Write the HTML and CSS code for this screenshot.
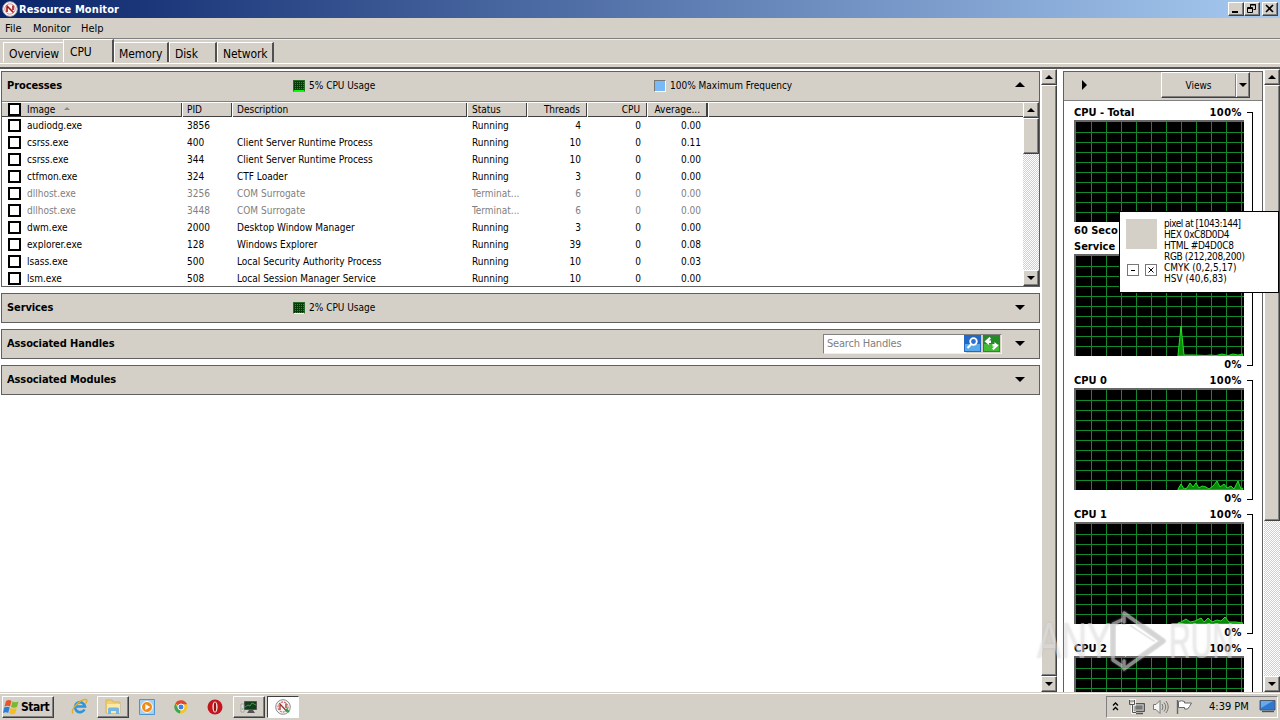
FILE: index.html
```html
<!DOCTYPE html>
<html lang="en">
<head>
  <meta charset="UTF-8">
  <meta name="viewport" content="width=device-width, initial-scale=1.0">
  <title>Resource Monitor</title>
  <link rel="stylesheet" href="styles.css">
</head>
<body>
  <header class="titlebar">
    <svg class="app-icon" width="16" height="16" viewBox="0 0 16 16"><circle cx="8" cy="8" r="7.3" fill="#fff" stroke="#a9a9a9"/><circle cx="8" cy="8" r="5.2" fill="#f5f5f5" stroke="#c77" stroke-width=".8"/><path d="M4.500 4.500l7 7M5 11V6M11 9V4.500" stroke="#a11" stroke-width="1.6"/></svg>
    <h1>Resource Monitor</h1>
    <div class="window-buttons">
      <button class="btn"><svg width="14" height="12"><path d="M3 9h6" stroke="#000" stroke-width="2"/></svg></button>
      <button class="btn"><svg width="14" height="12" fill="none" stroke="#000"><path d="M5.500 4V1.500H10.500V6.500H8.500M5 2h6M2.500 4.500h5v5h-5zM2 5.500h6"/></svg></button>
      <button class="btn close"><svg width="14" height="12"><path d="M3 2l7 7M10 2l-7 7" stroke="#000" stroke-width="1.600"/></svg></button>
    </div>
  </header>

  <nav class="menubar"><span class="m-file">File</span><span class="m-monitor">Monitor</span><span>Help</span></nav>

  <div class="tabs">
    <div class="tab t-overview">Overview</div>
    <div class="tab t-cpu active">CPU</div>
    <div class="tab t-memory">Memory</div>
    <div class="tab t-disk">Disk</div>
    <div class="tab t-network">Network</div>
  </div>

  <main class="content">
    <div class="left">
      <section class="panel processes">
        <div class="panel-head">
          <h2>Processes</h2>
          <span class="usage"><i class="meter green"></i>5% CPU Usage</span>
          <span class="usage freq"><i class="meter blue"></i>100% Maximum Frequency</span>
          <i class="arrow up"></i>
        </div>
        <div class="list">
          <div class="table">
            <div class="row head">
              <div class="c-check"><i class="check"></i></div>
              <div class="c-image">Image<i class="sort"></i></div>
              <div class="c-pid">PID</div>
              <div class="c-desc">Description</div>
              <div class="c-status">Status</div>
              <div class="c-threads">Threads</div>
              <div class="c-cpu">CPU</div>
              <div class="c-avg">Average...</div>
              <div class="c-rest"></div>
            </div>
            <div id="rows"></div>
          </div>
          <div class="scrollbar list-scroll">
            <div class="btn sb"><i class="tri up"></i></div>
            <div class="btn thumb"></div>
            <div class="btn sb end"><i class="tri"></i></div>
          </div>
        </div>
      </section>
      <section class="panel">
        <div class="panel-head">
          <h2>Services</h2>
          <span class="usage"><i class="meter green idle"></i>2% CPU Usage</span>
          <i class="arrow"></i>
        </div>
      </section>
      <section class="panel">
        <div class="panel-head">
          <h2>Associated Handles</h2>
          <div class="search">
            <span class="search-text">Search Handles</span>
            <svg width="17" height="17"><rect width="17" height="17" fill="#2368c4"/><path d="M1 9h15v7H1z" fill="#57a8ee"/><circle cx="9.500" cy="6.500" r="3.300" fill="#2c70d0" stroke="#fff" stroke-width="1.800"/><path d="M7 9.500L3.500 13" stroke="#fff" stroke-width="2.200"/></svg>
            <svg width="17" height="17"><rect width="17" height="17" fill="#278a2a"/><path d="M1 9h15v7H1z" fill="#43bb36"/><path d="M6.500 2L1.500 6.500 6 10V8h2V5.500H6L8 3.500zM10.500 15l5-4.500L11.500 7v2h-2v2.500h2L9 13.500z" fill="#fff"/></svg>
          </div>
          <i class="arrow"></i>
        </div>
      </section>
      <section class="panel">
        <div class="panel-head">
          <h2>Associated Modules</h2>
          <i class="arrow"></i>
        </div>
      </section>
    </div>
    <div class="scrollbar left-scroll">
      <div class="btn sb"><i class="tri up"></i></div>
      <div class="btn thumb"></div>
      <div class="btn sb end"><i class="tri"></i></div>
    </div>

    <aside class="side">
      <div class="side-head">
        <i class="arrow right"></i>
        <div class="btn views"><span>Views</span><b><i class="tri"></i></b></div>
      </div>
      <div class="graphs" id="graphs"></div>
    </aside>
    <div class="scrollbar side-scroll">
      <div class="btn sb"><i class="tri up"></i></div>
      <div class="btn thumb"></div>
      <div class="btn sb end"><i class="tri"></i></div>
    </div>
  </main>

  <footer class="taskbar">
    <div class="btn start">
      <svg width="17" height="16" viewBox="0 0 17 16"><path d="M3 2q3-2 5.500 0L7 7.500Q4.500 6 1.500 7.500z" fill="#e8552b"/><path d="M9.500 2.500q3 1.500 6 0L14 8q-3 1.300-6 0z" fill="#7ab92f"/><path d="M1.200 8.500q3-1.500 5.500 0L5.200 14Q3 12.500 0 14z" fill="#2b7fd6"/><path d="M7.700 9q3 1.500 6 0l-1.500 5.500q-3 1.500-6 0z" fill="#f5bd22"/></svg>
      <b>Start</b>
    </div>
    <div class="apps">
      <div class="app"><svg width="17" height="17" viewBox="0 0 17 17" fill="none"><path d="M13.500 11.500A5 5 0 1 1 14 8.500H5" stroke="#2c96dd" stroke-width="2.600"/><path d="M2 15.500C-1 12 9 1 15 1.500c2 .5.500 3-.5 4" stroke="#e3ad2b" stroke-width="1.300"/></svg></div>
      <div class="app btn"><svg width="17" height="17" viewBox="0 0 17 17"><path d="M1 2h6l1 2h7v11H1z" fill="#efcf72" stroke="#c9a54b" stroke-width=".6"/><path d="M2 6h13v9H2z" fill="#fbe9a6"/><path d="M3 16v-5q0-1.500 1.500-1.500h8Q14 9.500 14 11v5h-3v-3H6v3z" fill="#74b7e4"/></svg></div>
      <div class="app"><svg width="16" height="16" viewBox="0 0 16 16"><path d="M.5.500h15v15H.5z" fill="#a6d0ef" stroke="#4f94cf"/><circle cx="8" cy="8" r="5.500" fill="#f28a17" stroke="#fff"/><path d="M6.300 5v6l5-3z" fill="#fff"/></svg></div>
      <div class="app"><svg width="14" height="14" viewBox="0 0 14 14"><circle cx="7" cy="7" r="6.500" fill="#f6c42c"/><path d="M7 7L1.300 3.500A6.600 6.600 0 0 1 13 4.300H7z" fill="#df4636"/><path d="M7 7l-1 6.500A6.500 6.500 0 0 1 1.300 3.600L4 8.500z" fill="#3aa757"/><circle cx="7" cy="7" r="3" fill="#3f7fe8" stroke="#fff"/></svg></div>
      <div class="app"><svg width="16" height="16" viewBox="0 0 16 16"><circle cx="8" cy="8" r="7.500" fill="#c3161c"/><ellipse cx="8" cy="8" rx="2.600" ry="5.500" fill="#f4e4e2"/><ellipse cx="8" cy="8" rx="1.200" ry="4.800" fill="#9d1015"/></svg></div>
      <div class="app btn"><svg width="18" height="16" viewBox="0 0 18 16"><path d="M4.500 2.500h12v8h-12z" fill="#123c1c" stroke="#555"/><path d="M5 8l3-2 2 1 2-3 4 2" stroke="#3d9b45" fill="none"/><path d="M9 11h4l2 3H7z" fill="#555"/><path d="M1 5h3v8H1z" fill="#e2e2e2" stroke="#888" stroke-width=".6"/><path d="M2 10h1" stroke="#3a3"/></svg></div>
      <div class="app btn pressed"><svg width="16" height="16" viewBox="0 0 16 16"><circle cx="8" cy="8" r="7.300" fill="#f5f5f5" stroke="#888"/><circle cx="8" cy="8" r="5" fill="none" stroke="#d33" stroke-dasharray="2 1"/><path d="M4.500 4.500l7.500 8M5 11V6M11 9V4.500" stroke="#943b34" stroke-width="1.300"/><path d="M11 10l3 3" stroke="#2a9c46" stroke-width="2"/></svg></div>
    </div>
    <div class="tray">
      <svg class="chev" width="7" height="11" fill="none" stroke="#000" stroke-width="1.300"><path d="M1 4.500L3.500 2 6 4.500M1 9l2.500-2.500L6 9"/></svg>
      <svg width="17" height="16" viewBox="0 0 17 16"><path d="M4.500 4.500h11v8h-11z" fill="#9b9b9b" stroke="#555"/><path d="M6 6h8v5H6z" fill="#777" stroke="#ddd" stroke-width=".6"/><path d="M7 14.500h7" stroke="#555" stroke-width="1.500"/><path d="M.5 1.500h5v4h-2v8H7" fill="none" stroke="#fff" stroke-width="2.600"/><path d="M.5 1v4.500h5V1M3.500 5.500v8H7M2 1v2M4 1v2" fill="none" stroke="#555"/></svg>
      <svg class="vol" width="17" height="16" viewBox="0 0 17 16"><path d="M1.500 5.500H4l4-4v13l-4-4H1.500z" fill="#f6f6f6" stroke="#777"/><path d="M10 5q2 3 0 6M12 3.500q3.500 4.500 0 9M14 2q4.500 6 0 12" fill="none" stroke="#777"/></svg>
      <svg class="flag" width="17" height="16" viewBox="0 0 17 16"><path d="M2.500 2.500q3-1.500 6 0v1.500h7l-2 3.500-2 2.500h-3V8.500h-6z" fill="#fff" stroke="#666"/><path d="M1.500 1v14" stroke="#666" stroke-width="1.400"/></svg>
      <span class="clock">4:39 PM</span>
      <svg class="desk" width="17" height="15" viewBox="0 0 17 15"><path d="M1 1.500h15V11H1z" fill="#2f77d0" stroke="#4b5a6d"/><path d="M2 2h12L2 9z" fill="#68a9e8"/><path d="M3 12.500h12" stroke="#456" stroke-width="1.400"/></svg>
    </div>
  </footer>

  <div class="pixel-tip">
    <div class="tip-left">
      <div class="swatch"></div>
      <div class="tip-buttons">
        <i><svg width="10" height="10"><path d="M3 5.500h4" stroke="#000"/></svg></i>
        <i><svg width="10" height="10"><path d="M2.500 2.500l5 5M7.500 2.500l-5 5" stroke="#000"/></svg></i>
      </div>
    </div>
    <div class="tip-text">
      <p class="p1">pixel at [1043:144]</p><p class="p2">HEX 0xC8D0D4</p><p class="p3">HTML #D4D0C8</p><p class="p4">RGB (212,208,200)</p><p>CMYK (0,2,5,17)</p><p>HSV (40,6,83)</p>
    </div>
  </div>

  <div class="watermark">
    <span class="any">ANY</span>
    <svg width="60" height="64" viewBox="0 0 60 64" fill="none" stroke-linejoin="round" stroke-linecap="round"><path d="M15 13V4L54 32 15 60v-8M15 10L4 15v36l9 6" stroke="#777" stroke-opacity=".22" stroke-width="6"/><path d="M15 13V4L54 32 15 60v-8M15 10L4 15v36l9 6" stroke="#ccc" stroke-opacity=".62" stroke-width="3.500"/><path d="M16 16v32l22-16z" fill="#fff" fill-opacity=".8"/><path d="M22 17l23 15" stroke="#ddd" stroke-opacity=".7" stroke-width="2"/></svg>
    <span class="run">RUN</span>
  </div>

  <script>
    const processes = [
      ['audiodg.exe', 3856, '', 'Running', 4, '0.00'],
      ['csrss.exe', 400, 'Client Server Runtime Process', 'Running', 10, '0.11'],
      ['csrss.exe', 344, 'Client Server Runtime Process', 'Running', 10, '0.00'],
      ['ctfmon.exe', 324, 'CTF Loader', 'Running', 3, '0.00'],
      ['dllhost.exe', 3256, 'COM Surrogate', 'Terminat...', 6, '0.00'],
      ['dllhost.exe', 3448, 'COM Surrogate', 'Terminat...', 6, '0.00'],
      ['dwm.exe', 2000, 'Desktop Window Manager', 'Running', 3, '0.00'],
      ['explorer.exe', 128, 'Windows Explorer', 'Running', 39, '0.08'],
      ['lsass.exe', 500, 'Local Security Authority Process', 'Running', 10, '0.03'],
      ['lsm.exe', 508, 'Local Session Manager Service', 'Running', 10, '0.00']
    ];

    document.getElementById('rows').innerHTML = processes.map(p => `
      <div class="row ${p[3] === 'Running' ? '' : 'dead'}">
        <div class="c-check"><i class="check"></i></div>
        <div class="c-image">${p[0]}</div>
        <div class="c-pid">${p[1]}</div>
        <div class="c-desc">${p[2]}</div>
        <div class="c-status">${p[3]}</div>
        <div class="c-threads">${p[4]}</div>
        <div class="c-cpu">0</div>
        <div class="c-avg">${p[5]}</div>
      </div>`).join('');

    // each graph is 170 x 102, usage line runs along the bottom edge
    const graphs = [
      { name: 'CPU - Total', max: '100%', foot: '60 Seco', line: '' },
      { name: 'Service', max: '', foot: '', min: '0%', line: '104,101 107,72 110,101 120,101 132,101.500 136,101 142,101.500 148,100 154,101.500 159,100 164,101 169,100' },
      { name: 'CPU 0', max: '100%', foot: '', min: '0%', line: '104,101 107,96 110,101 113,100 116,95 119,99 122,95 125,100 128,98 132,99 135,101 139,98 143,93 146,99 150,96 153,100 157,98 160,101 164,93 167,101 169,100' },
      { name: 'CPU 1', max: '100%', foot: '', min: '0%', line: '104,101 107,100 112,97 116,100 121,99 127,96 130,100 134,96 138,100 143,98 147,99 151,95 155,100 162,100 169,101' },
      { name: 'CPU 2', max: '100%', line: '' }
    ];

    document.getElementById('graphs').innerHTML = graphs.map(g => `
      <div class="graph">
        <div class="label"><span>${g.name}</span><span class="pct">${g.max}</span></div>
        <div class="plot"><svg width="169" height="102"><polygon points="104,102 ${g.line} 169,102" class="${g.line ? 'line' : 'none'}"/></svg></div>
        <div class="label foot"><span>${g.foot || ''}</span><span class="pct">${g.min || ''}</span></div>
        <i class="bracket"></i>
      </div>`).join('');
  </script>
</body>
</html>
```
FILE: styles.css
```css
* {
  margin: 0;
  padding: 0;
  box-sizing: border-box;
}

body {
  width: 1280px;
  height: 720px;
  overflow: hidden;
  display: flex;
  flex-direction: column;
  background: #d4d0c8;
  font-family: Tahoma, "DejaVu Sans Condensed", "DejaVu Sans", sans-serif;
  font-stretch: condensed;
  font-size: 10px;
  line-height: 14px;
  color: #000;
  white-space: nowrap;
}

i, svg {
  display: block;
  flex-shrink: 0;
}

.btn {
  background: #d4d0c8;
  border: 1px solid;
  border-color: #fff #404040 #404040 #fff;
  box-shadow: inset -1px -1px #808080;
}

/* Title bar, menu and tabs */
.titlebar {
  height: 18px;
  flex-shrink: 0;
  display: flex;
  align-items: center;
  padding: 0 2px;
  background: linear-gradient(to right, #0a246a, #a6caf0);
}

h1 {
  flex: 1;
  margin-left: 1px;
  padding-top: 1px;
  font-size: 11px;
  letter-spacing: 0.1px;
  color: #fff;
}

.window-buttons {
  display: flex;
}

.window-buttons .btn {
  width: 16px;
  height: 14px;
}

.window-buttons .close {
  margin-left: 2px;
}

.menubar {
  height: 21px;
  flex-shrink: 0;
  display: flex;
  padding: 4px 5px 2px;
  border-bottom: 1px solid #808080;
  font-size: 11px;
}

.m-file {
  width: 28px;
}

.m-monitor {
  width: 48px;
}

.tabs {
  height: 30px;
  flex-shrink: 0;
  display: flex;
  align-items: flex-end;
  padding: 0 3px 5px;
  border-top: 1px solid #eee;
  border-bottom: 2px solid #555;
  background: linear-gradient(#fff, #fff) 0 23px / 100% 1px no-repeat;
  font-size: 12px;
}

.tab {
  height: 20px;
  padding: 4px 0 0 5px;
  border: 1px solid #fff;
  border-right: 2px solid #505050;
  border-bottom: 0;
  background: #d4d0c8;
  letter-spacing: -0.1px;
}

.t-overview { width: 60px; border-right: 0; }
.t-cpu { width: 51px; }
.t-memory { width: 55px; padding-left: 4px; }
.t-disk { width: 48px; }
.t-network { width: 57px; }

.tab.active {
  height: 23px;
  padding: 5px 0 0 6px;
}

/* Main area */
.content {
  height: 623px;
  flex-shrink: 0;
  display: flex;
  background: #fff;
}

.left {
  width: 1041px;
  padding: 2px 1px 0;
}

.panel {
  height: 30px;
  margin-bottom: 6px;
  border: 1px solid #606060;
  background: #d4d0c8;
}

.processes {
  height: 216px;
}

.panel-head {
  height: 29px;
  display: flex;
  align-items: center;
  padding: 0 14px 2px 5px;
}

h2 {
  width: 286px;
  padding-top: 1px;
  font-size: 11px;
  letter-spacing: -0.1px;
}

.usage {
  width: 361px;
  display: flex;
  align-items: center;
  gap: 4px;
  padding-top: 1px;
}

.meter {
  width: 12px;
  height: 12px;
  margin-top: -1px;
  border: 1px solid #555;
}

.meter.green {
  background:
    repeating-linear-gradient(90deg, #063c06 0 1px, transparent 1px 2px),
    repeating-linear-gradient(#063c06 0 1px, #1d9a1d 1px 2px);
  border-color: #2a6a2a;
  border-bottom: 2px solid #0f0;
}

.meter.idle {
  border-bottom: 1px solid #f5f5f5;
}

.meter.blue {
  background: #78b9f8;
  border-color: #777 #fff #fff #777;
}

.arrow {
  margin-left: auto;
  border: 5px solid transparent;
  border-top-color: #000;
  border-bottom: 0;
}

.arrow.up {
  border-top: 0;
  border-bottom: 5px solid #000;
  margin-top: -3px;
}

.arrow.right {
  border: 5px solid transparent;
  border-left-color: #000;
  border-right: 0;
  margin: 0;
}

.search {
  width: 179px;
  height: 20px;
  margin-left: 530px;
  display: flex;
  align-items: center;
  gap: 2px;
  padding: 1px;
  border: 1px solid;
  border-color: #808080 #eee #eee #808080;
  background: linear-gradient(to right, #fff 142px, #d4d0c8 142px);
}

.search-text {
  flex: 1;
  padding: 1px 0 0 2px;
  font-size: 11px;
  letter-spacing: -0.2px;
  color: #808080;
}

.list {
  height: 185px;
  display: flex;
  border-top: 1px solid #808080;
  background: #fff;
}

.table {
  flex: 1;
}

.row {
  height: 17px;
  display: flex;
  align-items: center;
}

.row > div {
  flex-shrink: 0;
}

.c-check { width: 20px; padding-left: 6px; }
.c-image { width: 160px; padding-left: 5px; }
.c-pid { width: 50px; padding-left: 5px; }
.c-desc { width: 235px; padding-left: 5px; }
.c-status { width: 60px; padding-left: 5px; }
.c-threads { width: 60px; padding-right: 6px; text-align: right; }
.c-cpu { width: 60px; padding-right: 6px; text-align: right; }
.c-avg { width: 60px; padding-right: 6px; text-align: right; }

.head {
  height: 15px;
  background: #d4d0c8;
  border-top: 1px solid #fff;
  border-bottom: 1px solid #404040;
}

.head > div:not(.c-check) {
  height: 14px;
  border-right: 1px solid #404040;
  box-shadow: 1px 0 #fff;
}

.head .c-image {
  display: flex;
}

.head .c-rest {
  border: 0;
  box-shadow: none;
}

.check {
  width: 13px;
  height: 13px;
  border: 2px solid #000;
  background: #fff;
}

.sort {
  margin: 4px 0 0 9px;
  border: 3px solid transparent;
  border-top: 0;
  border-bottom-color: #888;
  align-self: flex-start;
}

.dead {
  color: #808080;
}

/* Scrollbars */
.scrollbar {
  width: 16px;
  display: flex;
  flex-direction: column;
  background: repeating-conic-gradient(#fff 0 25%, #d4d0c8 0 50%) 0 0 / 2px 2px;
}

.sb {
  height: 16px;
  flex-shrink: 0;
  display: flex;
  align-items: center;
  justify-content: center;
}

.sb.end {
  margin-top: auto;
}

.tri {
  border: 4px solid transparent;
  border-top-color: #000;
  border-bottom: 0;
}

.tri.up {
  border-top: 0;
  border-bottom: 4px solid #000;
}

.list-scroll .thumb { height: 36px; }
.left-scroll .thumb { height: 591px; }
.side-scroll .thumb { height: 436px; }

/* Graph column */
.side {
  width: 200px;
  margin: 2px 1px 0 6px;
  border: 1px solid #606060;
  border-bottom: 0;
  overflow: hidden;
}

.side-head {
  height: 29px;
  display: flex;
  align-items: center;
  justify-content: space-between;
  padding: 0 12px 2px 18px;
  border-bottom: 1px solid #808080;
  background: #d4d0c8;
}

.views {
  width: 89px;
  height: 26px;
  display: flex;
  align-items: center;
}

.views span {
  flex: 1;
  padding-top: 2px;
  text-align: center;
}

.views b {
  width: 14px;
  height: 23px;
  border-left: 1px solid #808080;
  box-shadow: inset 1px 0 #fff;
  display: flex;
  align-items: center;
  justify-content: center;
}

.graphs {
  padding: 4px 0 0 10px;
}

.graph {
  position: relative;
  width: 180px;
  height: 134px;
}

.label {
  height: 15px;
  width: 168px;
  display: flex;
  justify-content: space-between;
  font-size: 11px;
  line-height: 15px;
  font-weight: bold;
}

.pct {
  letter-spacing: 0.5px;
}

.plot {
  width: 170px;
  height: 102px;
  border-top: 2px solid #666;
  border-left: 2px solid #666;
  background:
    repeating-linear-gradient(to right, #128a2c 0 1px, transparent 1px 15px) 15px 0 / 100% 100% no-repeat,
    repeating-linear-gradient(#128a2c 0 1px, transparent 1px 10px) 0 10px / 100% 100% no-repeat,
    #000;
}

.plot svg {
  margin: -2px 0 0 -2px;
}

.line {
  fill: #0a8a0a;
  stroke: #22e022;
}

.none {
  display: none;
}

.foot {
  height: 17px;
  line-height: 18px;
}

.bracket {
  position: absolute;
  left: 173px;
  top: 7px;
  width: 6px;
  height: 120px;
  border: 1px solid #000;
  border-left: 0;
}

/* Taskbar */
.taskbar {
  height: 28px;
  flex-shrink: 0;
  display: flex;
  align-items: center;
  padding: 0 2px;
  border-top: 1px solid #d4d0c8;
  box-shadow: inset 0 1px #fff;
}

.start {
  width: 52px;
  height: 22px;
  display: flex;
  align-items: center;
  gap: 1px;
  font-size: 12px;
}

.start b {
  letter-spacing: -0.5px;
}

.apps {
  flex: 1;
  display: flex;
  margin-left: 9px;
  gap: 2px;
}

.app {
  width: 32px;
  height: 22px;
  display: flex;
  align-items: center;
  justify-content: center;
}

.pressed {
  background: #fff;
  border-color: #404040 #fff #fff #404040;
  box-shadow: none;
}

.tray {
  width: 172px;
  height: 22px;
  display: flex;
  align-items: center;
  padding-left: 5px;
  border: 1px solid;
  border-color: #808080 #fff #fff #808080;
}

.chev { margin-right: 10px; }
.vol { margin-left: 6px; }
.flag { margin-left: 7px; }

.clock {
  width: 42px;
  margin: 0 8px 0 16px;
  font-size: 11px;
}

/* Colour picker tooltip */
.pixel-tip {
  position: absolute;
  left: 1119px;
  top: 211px;
  width: 160px;
  height: 82px;
  display: flex;
  padding: 7px 6px;
  border: 1px solid #000;
  background: #fff;
}

.tip-left {
  width: 38px;
}

.swatch {
  width: 31px;
  height: 30px;
  background: #d4d0c8;
}

.tip-buttons {
  display: flex;
  gap: 6px;
  margin: 15px 0 0 1px;
}

.tip-buttons i {
  width: 12px;
  height: 12px;
  border: 1px solid #777;
}

.tip-text {
  margin-top: -1px;
  line-height: 11px;
}

.p1 { letter-spacing: -0.5px; }
.p2 { letter-spacing: -0.4px; }
.p3 { letter-spacing: -0.25px; }
.p4 { letter-spacing: -0.35px; }

/* Recording watermark */
.watermark {
  position: absolute;
  left: 1037px;
  top: 608px;
  width: 200px;
  height: 66px;
  display: flex;
  align-items: center;
  font: 50px/64px "Liberation Sans", Arial, sans-serif;
  color: rgba(235, 235, 235, 0.5);
  text-shadow: 0 0 3px rgba(110, 110, 110, 0.18);
}

.watermark span {
  width: 72px;
  transform: scaleX(0.72);
  transform-origin: left;
}

.watermark .run {
  width: 60px;
  transform: scaleX(0.6);
}
```
